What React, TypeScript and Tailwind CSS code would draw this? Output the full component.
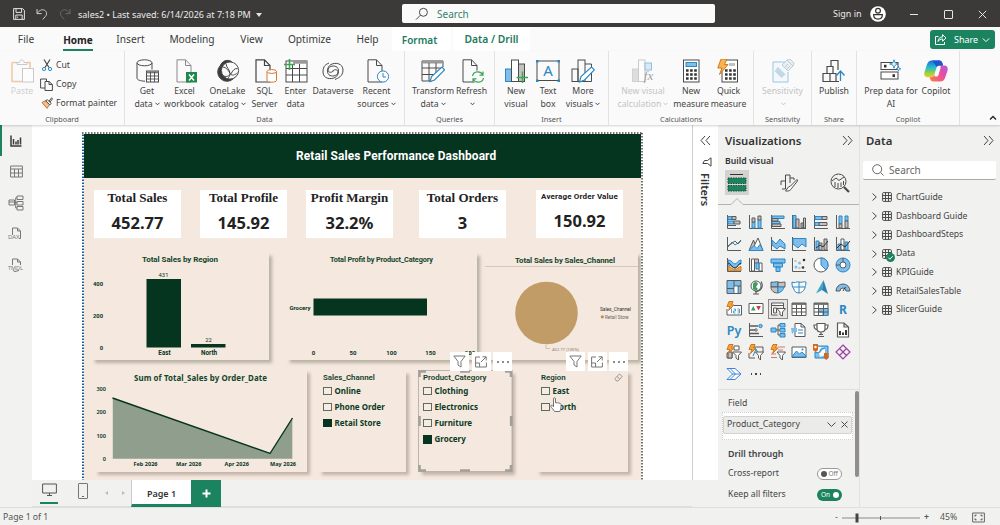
import type { ReactNode } from "react";

const INK = "#4a4a4a";
const BLUE = "#7fbdea";
const DEEP = "#2b88c4";
const GREY = "#c4c2c0";
const FOREST = "#06351f";
const TITLE = "#12452c";

type IconProps = { size?: number; box?: number; className?: string; stroke?: string; children: ReactNode };

function Icon({ size = 24, box = 24, className = "", stroke = INK, children }: IconProps) {
  return (
    <svg
      width={size}
      height={size}
      viewBox={`0 0 ${box} ${box}`}
      fill="none"
      stroke={stroke}
      strokeWidth={1}
      className={`block shrink-0 ${className}`}
    >
      {children}
    </svg>
  );
}

/* ---------- title bar ---------- */

function TitleBar() {
  return (
    <header className="flex h-[27px] shrink-0 items-center bg-[#3b3a39] text-[#ececec]">
      <div className="flex w-[402px] items-center">
        <Icon size={12} box={12} className="ml-[13px]">
          <path d="M.6.6h9L11.4 2.4v9H.6zM3 .8v3.6h5.6V.8M2.8 11.2V7h6.4v4.2M4.6 9.8V8.6" stroke="#e4e4e4" />
        </Icon>
        <Icon size={12} box={12} className="ml-[11px]">
          <path d="M1 1v4.6h4.6M1.2 5.4C3 2.4 6 1 8.4 2.2c2.8 1.5 2.6 4.5 1 6.2L6.8 11.4" stroke="#d0d0d0" />
        </Icon>
        <Icon size={12} box={12} className="ml-[11px]">
          <path d="M11 1v4.6H6.4M10.8 5.4C9 2.4 6 1 3.6 2.2c-2.8 1.5-2.6 4.5-1 6.2l2.6 3" stroke="#6a6a69" />
        </Icon>
        <span className="mt-[3px] ml-[7px] text-[9px] whitespace-nowrap">sales2 • Last saved: 6/14/2026 at 7:18 PM</span>
        <span className="mt-[2px] ml-[5px] border-x-[3.5px] border-t-[4px] border-x-transparent border-t-[#e4e4e4]" />
      </div>
      <div className="flex h-[19px] w-[313px] items-center rounded-[2px] bg-[#fafafa]">
        <Icon size={14} box={14} className="ml-[13px]">
          <circle cx="8.4" cy="5.3" r="4" />
          <path d="M5.4 8.2 1 12.6" />
        </Icon>
        <span className="mt-[2px] ml-[8px] text-[10px] text-[#38806b]">Search</span>
      </div>
      <span className="mt-[1px] ml-[118px] text-[9px] whitespace-nowrap">Sign in</span>
      <Icon size={16} box={16} className="ml-[8px]">
        <circle cx="8" cy="8" r="7.8" fill="#fff" stroke="none" />
        <circle cx="8" cy="4.8" r="2.4" stroke="#333" strokeWidth="1.2" />
        <path d="M3.6 8.6h8.8c0 3-1.8 4.6-4.4 4.6S3.6 11.6 3.6 8.6z" stroke="#333" strokeWidth="1.2" />
      </Icon>
      <span className="mt-[1px] ml-[24px] h-px w-[8px] bg-[#e4e4e4]" />
      <span className="mt-[1px] ml-[26px] size-[9px] rounded-[1px] border border-[#e4e4e4]" />
      <Icon size={9} box={9} className="mt-[1px] ml-[25px]">
        <path d="m.8.8 7.4 7.4M8.2.8.8 8.2" stroke="#e4e4e4" />
      </Icon>
    </header>
  );
}

/* ---------- ribbon ---------- */

const tabs = [
  { label: "File", cls: "w-[52px]" },
  { label: "Home", cls: "w-[52px] font-bold text-[10px] text-[#222]" },
  { label: "Insert", cls: "w-[53px]" },
  { label: "Modeling", cls: "w-[70px]" },
  { label: "View", cls: "w-[49px]" },
  { label: "Optimize", cls: "w-[67px]" },
  { label: "Help", cls: "w-[49px]" },
  { label: "Format", cls: "w-[59px] bg-white font-semibold text-[10px] text-[#217a5c] pr-1" },
  { label: "Data / Drill", cls: "w-[77px] ml-[2px] bg-white font-semibold text-[10.3px] text-[#217a5c]" },
];

function Tabs() {
  return (
    <nav className="flex h-[24px] shrink-0 items-center text-[10.2px] text-[#3a3a3a]">
      {tabs.map((t) => (
        <div
          key={t.label}
          className={`relative flex h-[24px] items-center justify-center pt-[2px] whitespace-nowrap ${t.cls}`}
        >
          {t.label}
          {t.label === "Home" && <span className="absolute bottom-0 left-[11px] h-[2px] w-[30px] bg-[#1b8360]" />}
        </div>
      ))}
      <div className="mt-[1px] ml-[400px] flex h-[19px] w-[65px] shrink-0 items-center rounded-[3px] bg-[#1b8360] text-white">
        <Icon size={13} box={13} className="ml-[4px]">
          <path d="M4.5 3.5H1.5v8h9V9M4 8.5c.4-3 2-4.600 4.600-4.600V1.600L12 5 8.600 8.200V6C6.500 6 5 6.800 4 8.500z" stroke="#fff" />
        </Icon>
        <span className="ml-[7px] text-[9px]">Share</span>
        <Icon size={8} box={8} className="ml-[4px]">
          <path d="m.8 2.400 3.200 3.200 3.200-3.200" stroke="#fff" />
        </Icon>
      </div>
    </nav>
  );
}

const docPath = "M4 .8h8.500L18 6.500V23H4zM12.500.8v5.700H18";

const ribbonIcons: Record<string, ReactNode> = {
  get: (
    <>
      <path d="M2 4v15c0 1.800 3 3 8 3.200M17 4v6.500" />
      <ellipse cx="9.500" cy="3.800" rx="7.500" ry="3" />
      <rect x="11.500" y="12" width="12" height="11" fill="#fff" />
      <path d="M11.500 13.300h12" strokeWidth="2" stroke="#777" />
      <path d="M11.500 17h12M11.500 20h12M15.500 13v10M19.500 13v10" strokeWidth=".9" />
    </>
  ),
  excel: (
    <>
      <path d={docPath} stroke="#8a8a8a" />
      <rect x="13" y="13" width="11" height="10.500" fill="#1d8a4c" stroke="none" />
      <path d="m16 15.500 5 6M21 15.500l-5 6" stroke="#fff" strokeWidth="1.500" />
    </>
  ),
  onelake: (
    <>
      <circle cx="11" cy="13" r="9.300" fill="#3b3b3b" />
      <path d="M4 7.500C6 1 12 .3 15.500 2.500L12 8z" fill="#3b3b3b" />
      <circle cx="14" cy="11.500" r="8.600" fill="#fafafa" />
      <path d="M6.500 8c4 0 6 4 8 7 1.500 2 4 1 7-1M6.500 16c3 3 7 1 9-2 1.500-3 3-4.500 6-4.500M10 4.500c0 4 4 6 4 10 0 2-1 4-2.500 5" />
    </>
  ),
  sql: (
    <>
      <path d={docPath} stroke="#444" strokeWidth="1.200" transform="translate(-1 0)" />
      <path d="M14 12.500v9c0 2.200 9.500 2.200 9.500 0v-9z" fill="#fff" stroke="#d0783a" />
      <ellipse cx="18.750" cy="12.500" rx="4.750" ry="1.900" fill="#fff" stroke="#d0783a" />
    </>
  ),
  enter: (
    <>
      <rect x="2" y="2" width="21" height="21" fill="#fff" />
      <path d="M9 3h14" stroke="#999" strokeWidth="3.500" />
      <path d="M2 9.500h21M2 16h21M8.500 5v18M15.500 5v18" />
      <path d="M5.500 0v11M0 5.500h11" stroke="#3aa655" strokeWidth="1.600" />
    </>
  ),
  dataverse: (
    <>
      <path d="M12 12.500c0-2.500 5-2.500 5 .500s-4.500 5-8 3.500-3.500-8.500 1-11 12-1 12 5.500-5 8-8 9.500" />
      <path d="M12 11.500c0 2.500-5 2.500-5-.500s4.500-5 8-3.500 3.500 8.500-1 11-12 1-12-5.500 3-7.500 6-9" />
    </>
  ),
  recent: (
    <>
      <path d={docPath} transform="translate(-1 0)" />
      <circle cx="18" cy="17.500" r="5.600" fill="#fff" stroke={DEEP} />
      <path d="M18 14v4h3" stroke={DEEP} />
    </>
  ),
  transform: (
    <>
      <path d="M1 2h21v6M1 2v20h10" />
      <path d="M1.500 3.200h20" stroke="#9a9a9a" strokeWidth="2.600" />
      <path d="M1 9h20M1 15.500h13M8 4v18M15 4v11" />
      <path d="m9 22.500 1.500-5L21 8l2.500 2.800L13.500 21z" fill="#fff" stroke={DEEP} strokeWidth="1.200" />
    </>
  ),
  refresh: (
    <>
      <path d={docPath} transform="translate(-1 0)" />
      <circle cx="18" cy="18" r="6.500" fill="#fafafa" stroke="none" />
      <path
        d="M12.500 17c1-5 8-5.500 10.300-1.300M23 12.500v3.600h-3.500M23.500 19c-1 5-8 5.500-10.300 1.300M13 23.500v-3.600h3.500"
        stroke="#3aa655"
        strokeWidth="1.200"
      />
    </>
  ),
  newvisual: (
    <>
      <rect x="1.500" y="10" width="6" height="12.500" fill={BLUE} stroke={DEEP} />
      <rect x="7.500" y="1" width="7" height="21.500" fill="#fff" />
      <rect x="14.500" y="5" width="6" height="17.500" fill={GREY} />
      <path d="M18.500 12.500v11.500M12.500 18.500h12" stroke="#3aa655" strokeWidth="1.500" />
    </>
  ),
  textbox: (
    <>
      <rect x="1" y="2" width="22" height="19.500" />
      <path d="M0 1h2.500v2.500H0zM21.500 1H24v2.500h-2.500zM0 20.500h2.500V23H0zM21.500 20.500H24V23h-2.500z" fill={DEEP} stroke="none" />
      <text x="12" y="17" textAnchor="middle" fontSize="15" fill={DEEP} stroke="none">
        A
      </text>
    </>
  ),
  more: (
    <>
      <rect x="1" y="10" width="6" height="12.500" />
      <rect x="7" y="1" width="7" height="21.500" />
      <path d="M14 5h6.500v17.500H14" />
      <path d="m8.500 23 1.500-5.500L20.500 8l2.800 2.800L13.500 21z" fill="#fff" stroke={DEEP} strokeWidth="1.200" />
    </>
  ),
  calc: (
    <g opacity=".5">
      <rect x="1.500" y="10" width="6" height="12.500" fill={GREY} stroke="#aaa" />
      <rect x="7.500" y="1" width="6.500" height="21.500" fill="#fff" stroke="#999" />
      <rect x="14" y="4" width="6.500" height="7" fill="#b5dbf0" stroke={DEEP} />
      <text x="17.500" y="20.500" textAnchor="middle" fontSize="13" fontStyle="italic" fill="#444" stroke="none" fontFamily="Liberation Serif">
        fx
      </text>
    </g>
  ),
  measure: (
    <>
      <rect x="4.500" y="1" width="15.500" height="22" fill="#fff" />
      <rect x="7" y="3.500" width="10.500" height="4" fill={BLUE} stroke={DEEP} />
      <path d="M7 11.500h11M7 15.500h11M7 19.500h11" stroke="#333" strokeWidth="2.500" strokeDasharray="2.600 1.500" />
    </>
  ),
  quick: (
    <>
      <rect x="5" y="1" width="15.500" height="22" fill="#fff" />
      <path d="M12 5.500h6" stroke={GREY} strokeWidth="3" />
      <path d="M8 11.500h11M8 15.500h11M8 19.500h11" stroke="#333" strokeWidth="2.500" strokeDasharray="2.600 1.500" />
      <path d="M4 0h6L7.500 5.500H11L2.500 15.500 5 9H.8z" fill="#f7b354" stroke="#cf7a1c" />
    </>
  ),
  sensitivity: (
    <g opacity=".45">
      <path d="M15 3H2v20h15V13" stroke={DEEP} fill="#eef7fb" />
      <path d="m6 9 7.500 7.500M4.500 11l7 7" stroke="#7fb3cc" strokeWidth="3" />
      <path d="m11 6 5-5 6 6-5 5zM16 1l3-1 4 4-1 3M13 9l4-4M15 11l4-4" fill="#cfe3ec" stroke="#7a9aa8" />
    </g>
  ),
  publish: (
    <>
      <path d="M1 22.500v-8h7v8zM5 14V7.500h6v7M8 14.500h6v8H8M9 7V1.500h7V11M14 22.500h3" strokeWidth="1.200" />
      <path d="M18.500 22V12M14.500 16.500l4-4.500 4 4.500" stroke={DEEP} strokeWidth="1.300" />
    </>
  ),
  prep: (
    <>
      <rect x="2" y="3.500" width="17" height="7" fill="#fff" />
      <rect x="2" y="13" width="17" height="7" fill="#fff" />
      <path d="M5 5.800h2.500V8.500H5zM13.500 15.300H16V18h-2.500z" fill="#333" stroke="none" />
      <path
        d="M15 .8c.5 2.800 1.500 3.700 4.300 4.200-2.800.5-3.800 1.400-4.300 4.200-.5-2.800-1.500-3.700-4.300-4.200C13.500 4.500 14.500 3.600 15 .8z"
        fill="#d6f1fa"
        stroke={DEEP}
      />
      <path
        d="M19.500 7.500c.2 1.500.8 2.100 2.300 2.300-1.500.2-2.100.8-2.300 2.300-.2-1.500-.8-2.100-2.300-2.300 1.500-.2 2.100-.8 2.300-2.300z"
        fill="#fff"
        stroke={DEEP}
      />
    </>
  ),
  copilot: (
    <>
      <defs>
        <linearGradient id="cpA" x1="0" y1="0" x2="0" y2="1">
          <stop offset="0" stopColor="#1b6fe0" />
          <stop offset=".45" stopColor="#2bc0c8" />
          <stop offset=".75" stopColor="#9bd13a" />
          <stop offset="1" stopColor="#f7c62c" />
        </linearGradient>
        <linearGradient id="cpB" x1="1" y1="0" x2="0" y2="1">
          <stop offset="0" stopColor="#9a5cf0" />
          <stop offset=".5" stopColor="#ea4fa0" />
          <stop offset="1" stopColor="#fb7f3c" />
        </linearGradient>
      </defs>
      <path
        d="M8 1.500h7c2 0 3 1 3.500 3L19 6.500h-3.500c-2 0-2.700 1-3.200 2.700L10.500 15c-.7 2.300-1.700 3.300-4 3.300H3.500C.8 18.300-.3 16 .6 12.800L3 5.500c.9-2.700 2.300-4 5-4z"
        fill="url(#cpA)"
        stroke="none"
      />
      <path
        d="M14.500 1.500c2 0 3.200 1.300 3.600 3l.7 2h1.700c2.700 0 3.800 2.300 2.900 5.500L21 19c-.9 2.500-2.300 3.500-5 3.500H9.500c-2 0-3-1-3.500-3l-.3-1.200h1c2.300 0 3.300-1 4-3.300l-.2.7c-.3 1.100.3 1.800 1.300 1.800h.7c1 0 1.800-.6 2.100-1.800l1.900-6.700C17 7 16.300 6.500 15.500 6.500h1z"
        fill="url(#cpB)"
        stroke="none"
      />
      <path d="M8 1.500h7c2 0 3 1 3.500 3L19 6.500h-3.500c-1.500 0-2.200.5-2.700 1.500z" fill="#1d54cf" stroke="none" />
    </>
  ),
};

type RibbonItem = { icon: string; lines: string[]; width: string; caret?: boolean; muted?: boolean };
type RibbonGroupData = { label: string; width: string; items: RibbonItem[] };

const groups: RibbonGroupData[] = [
  {
    label: "Data",
    width: "w-[280px]",
    items: [
      { icon: "get", lines: ["Get", "data"], width: "w-[44px]", caret: true },
      { icon: "excel", lines: ["Excel", "workbook"], width: "w-[31px]" },
      { icon: "onelake", lines: ["OneLake", "catalog"], width: "w-[55px]", caret: true },
      { icon: "sql", lines: ["SQL", "Server"], width: "w-[19px]" },
      { icon: "enter", lines: ["Enter", "data"], width: "w-[43px]" },
      { icon: "dataverse", lines: ["Dataverse"], width: "w-[32px]" },
      { icon: "recent", lines: ["Recent", "sources"], width: "w-[55px]", caret: true },
    ],
  },
  {
    label: "Queries",
    width: "w-[90px]",
    items: [
      { icon: "transform", lines: ["Transform", "data"], width: "w-[56px]", caret: true },
      { icon: "refresh", lines: ["Refresh", ""], width: "w-[21px]", caret: true },
    ],
  },
  {
    label: "Insert",
    width: "w-[114px]",
    items: [
      { icon: "newvisual", lines: ["New", "visual"], width: "w-[42px]" },
      { icon: "textbox", lines: ["Text", "box"], width: "w-[22px]" },
      { icon: "more", lines: ["More", "visuals"], width: "w-[48px]", caret: true },
    ],
  },
  {
    label: "Calculations",
    width: "w-[145px]",
    items: [
      { icon: "calc", lines: ["New visual", "calculation"], width: "w-[68px]", caret: true, muted: true },
      { icon: "measure", lines: ["New", "measure"], width: "w-[28px]" },
      { icon: "quick", lines: ["Quick", "measure"], width: "w-[47px]" },
    ],
  },
  {
    label: "Sensitivity",
    width: "w-[58px]",
    items: [{ icon: "sensitivity", lines: ["Sensitivity", ""], width: "w-[57px]", caret: true, muted: true }],
  },
  { label: "Share", width: "w-[45px]", items: [{ icon: "publish", lines: ["Publish"], width: "w-[44px]" }] },
  {
    label: "Copilot",
    width: "w-[103px]",
    items: [
      { icon: "prep", lines: ["Prep data for", "AI"], width: "w-[68px]" },
      { icon: "copilot", lines: ["Copilot"], width: "w-[22px]" },
    ],
  },
];

function Caret() {
  return (
    <svg width="5" height="4" viewBox="0 0 5 4" fill="none" stroke="currentColor" className="ml-[2px] inline-block">
      <path d="M.5.8 2.5 2.8 4.5.8" />
    </svg>
  );
}

function RibbonButton({ icon, lines, width, caret, muted }: RibbonItem) {
  return (
    <div className={`flex shrink-0 flex-col items-center ${width} ${muted ? "text-[#c4c4c4]" : "text-[#444]"}`}>
      <Icon>{ribbonIcons[icon]}</Icon>
      <div className="mt-[2px] text-center text-[8.7px] leading-[12.5px] whitespace-nowrap">
        {lines.map((line, i) => (
          <div key={i}>
            {line}
            {caret && i === lines.length - 1 && <Caret />}
          </div>
        ))}
      </div>
    </div>
  );
}

function ClipboardGroup() {
  return (
    <div className="flex h-[74px] w-[125px] shrink-0 flex-col border-r border-[#e3e3e3]">
      <div className="flex flex-1 pt-[8px]">
        <div className="flex w-[41px] flex-col items-center pl-[3px] text-[8.8px] text-[#cfcfcf]">
          <Icon>
            <g opacity=".6">
              <path d="M2 3.5h5M17 3.5h3V9M2 3.5v19h10" stroke="#e9a96b" strokeWidth="1.5" />
              <path d="M7 5.5V3.5h2.5C9.5 0 14 0 14 3.5H17v2z" stroke="#aaa" />
              <rect x="12.5" y="9.5" width="11" height="13.5" fill="#fff" stroke="#aaa" />
            </g>
          </Icon>
          <span className="mt-[2px] leading-[12.5px]">Paste</span>
        </div>
        <div className="flex flex-col gap-[6.7px] text-[8.7px] leading-[12px] whitespace-nowrap text-[#3f3f3f]">
          <div className="flex items-center gap-[3px]">
            <Icon size={12} box={12}>
              <path d="M3 .5l5 8M9 .5l-5 8" strokeWidth="1.2" />
              <circle cx="3" cy="10" r="1.6" stroke={DEEP} />
              <circle cx="9" cy="10" r="1.6" stroke={DEEP} />
            </Icon>
            Cut
          </div>
          <div className="flex items-center gap-[3px]">
            <Icon size={13} box={13} className="-ml-px">
              <path d="M5 10H.6V1h5.9v2.5M5 3.5h4L12.4 6.500v6H5zM9 3.500v3h3.400" />
            </Icon>
            Copy
          </div>
          <div className="flex items-center gap-[3px]">
            <Icon size={12} box={12}>
              <path d="m1 5.500 3.500-1.800L8.500 7.500 6 11.400z" fill="#f3c08a" stroke="#c9762c" />
              <path d="m4.500 3.800 1.800-1 4 3.600-1.500 1.400zM8 4.200l2.600-3.400 1 .9-2.500 3.300" fill="#fff" />
            </Icon>
            Format painter
          </div>
        </div>
      </div>
      <div className="h-[11px] text-center text-[7.4px] leading-[11px] text-[#555]">Clipboard</div>
    </div>
  );
}

function Ribbon() {
  return (
    <section className="relative z-10 flex h-[74px] shrink-0 bg-[#fafafa] shadow-[0_1px_2px_rgba(0,0,0,0.18)]">
      <ClipboardGroup />
      {groups.map((g) => (
        <div key={g.label} className={`flex shrink-0 flex-col border-r border-[#e3e3e3] ${g.width}`}>
          <div className="flex flex-1 pt-[8px]">
            {g.items.map((item) => (
              <RibbonButton key={item.icon} {...item} />
            ))}
          </div>
          <div className="h-[11px] text-center text-[7.4px] leading-[11px] text-[#555]">{g.label}</div>
        </div>
      ))}
      <Icon size={8} box={8} className="mt-[63px] ml-[29px]">
        <path d="m1 5.5 3-3 3 3" stroke="#222" strokeWidth="1.3" />
      </Icon>
    </section>
  );
}

/* ---------- left rail ---------- */

function Rail() {
  return (
    <aside className="flex w-[32px] shrink-0 flex-col items-center bg-[#f2f2f1]">
      <div className="flex h-[31px] w-full items-center justify-center border-l-2 border-[#1b8360] pr-[2px]">
        <Icon size={12} box={12}>
          <path d="M1 .5V11h10.5M3.5 9.5V4M6 9.5V6.5M8 9.5V5M10.5 9.5V2.5" stroke="#3a3a3a" strokeWidth="1.5" />
        </Icon>
      </div>
      <Icon size={13} box={13} className="mt-[9px]">
        <path d="M.6 1h11.8v11H.6zM.6 4h11.8M.6 8h11.8M4.5 4v8M8.5 4v8" stroke="#777" />
      </Icon>
      <Icon size={16} box={16} className="mt-[17px]">
        <path
          d="M1 5h5.5v5H1zM1 7h5.5M9 1h6v3.5H9zM9 6.5h6V10H9zM9 11.5h6V15H9zM6.5 7.5H9M7.7 2.8V13M7.7 2.8H9M7.7 13H9"
          stroke="#777"
        />
      </Icon>
      <div className="relative mt-[16px] h-[16px] w-[14px]">
        <Icon size={14} box={14}>
          <path d="M3.5 8V1h5L11.5 4v7.500H10M8.500 1v3h3" stroke="#777" />
        </Icon>
        <span className="absolute top-[6px] left-[-1px] text-[6px] text-[#777]">DAX</span>
      </div>
      <div className="relative mt-[15px] h-[16px] w-[14px]">
        <Icon size={14} box={14}>
          <path d="M3.500 7V1h5L11.500 4v3M8.500 1v3h3M4 12.500l2 1L10 12.500" stroke="#777" />
        </Icon>
        <span className="absolute top-[6px] left-[-1px] text-[5.5px] text-[#777]">TMDL</span>
      </div>
    </aside>
  );
}

/* ---------- report page ---------- */

const kpis = [
  { title: "Total Sales", value: "452.77", cls: "" },
  { title: "Total Profile", value: "145.92", cls: "ml-[19px]" },
  { title: "Profit Margin", value: "32.2%", cls: "ml-[19px]" },
  { title: "Total Orders", value: "3", cls: "ml-[26px]" },
  { title: "Average Order Value", value: "150.92", cls: "ml-[30px]", small: true },
];

function KpiCard({ title, value, cls, small }: (typeof kpis)[number] & { small?: boolean }) {
  return (
    <div className={`flex h-[48px] w-[87px] shrink-0 flex-col items-center bg-white text-[#222] ${cls}`}>
      <div
        className={
          small
            ? "mt-[1px] font-[Roboto] text-[8px] leading-[11px] font-bold tracking-[0.02em] whitespace-nowrap"
            : "font-['Liberation_Serif'] text-[13px] leading-[16px] font-bold whitespace-nowrap"
        }
      >
        {title}
      </div>
      <div className={`text-[16.5px] leading-[20px] font-bold ${small ? "mt-[9px]" : "mt-[7px]"}`}>{value}</div>
    </div>
  );
}

function RegionChart() {
  return (
    <svg width="177" height="107" viewBox="92 253 177 107" className="block font-[Roboto]" fill={FOREST} fontWeight="700">
      <text x="142" y="262" fontSize="8" textLength="76" fill={TITLE}>Total Sales by Region</text>
      <g fontSize="5.8" textAnchor="end">
        <text x="103" y="286">400</text>
        <text x="103" y="318">200</text>
        <text x="103" y="349.5">0</text>
      </g>
      <rect x="146.5" y="279" width="34.5" height="68.5" />
      <rect x="191" y="344" width="34.5" height="3.5" />
      <g fontSize="5.8" textAnchor="middle">
        <text x="163.5" y="277" fontWeight="400">431</text>
        <text x="208.5" y="341.5" fontWeight="400">22</text>
        <text x="164.5" y="354.5" fontSize="6.3">East</text>
        <text x="209" y="354.5" fontSize="6.3">North</text>
      </g>
    </svg>
  );
}

function ProfitChart() {
  return (
    <svg width="190" height="107" viewBox="287 253 190 107" className="block font-[Roboto]" fill={FOREST} fontWeight="700">
      <text x="330" y="262" fontSize="7.3" textLength="103" fill={TITLE}>Total Profit by Product_Category</text>
      <text x="289.5" y="309.5" fontSize="6" textLength="21">Grocery</text>
      <rect x="313.5" y="298.5" width="113.5" height="17" />
      <g fontSize="6" textAnchor="middle">
        <text x="313.5" y="354.5">0</text>
        <text x="353" y="354.5">50</text>
        <text x="391.5" y="354.5">100</text>
        <text x="430.5" y="354.5">150</text>
        <text x="470" y="354.5">200</text>
      </g>
    </svg>
  );
}

function ChannelChart() {
  return (
    <svg width="153" height="107" viewBox="485 253 153 107" className="block font-[Roboto]" fill={FOREST}>
      <text x="515" y="263" fontSize="7.8" fontWeight="700" textLength="100" fill={TITLE}>Total Sales by Sales_Channel</text>
      <path d="M485 266.5h153" stroke="#c9bfb4" strokeWidth=".8" />
      <circle cx="546.5" cy="313" r="31.300" fill="#c29c66" />
      <path d="M546 345v3.500h4" fill="none" stroke="#aaa" strokeWidth=".6" />
      <text x="552" y="350.500" fontSize="4.300" fill="#8a8078" textLength="27">452.77 (100%)</text>
      <text x="600" y="311" fontSize="4.900" fill="#333" textLength="31">Sales_Channel</text>
      <circle cx="602.300" cy="316.800" r="1.600" fill="#b8904f" />
      <text x="605" y="318.700" fontSize="4.600" fill="#666" textLength="23.500">Retail Store</text>
    </svg>
  );
}

function TrendChart() {
  return (
    <svg width="212" height="102" viewBox="95 370 212 102" className="block" fill={FOREST} fontWeight="700">
      <text x="134" y="380.500" fontSize="7.900" textLength="133" fill={TITLE}>Sum of Total_Sales by Order_Date</text>
      <g fontSize="5.600" textAnchor="end" fontWeight="600">
        <text x="106" y="390.500">300</text>
        <text x="106" y="414">200</text>
        <text x="106" y="437.500">100</text>
        <text x="106" y="461">0</text>
      </g>
      <path d="M112.800 398 270 453.500 292.300 418v40.700H112.800z" fill="#8f9e8d" />
      <path d="M112.500 398 270 453.500 292.500 418" fill="none" stroke={FOREST} strokeWidth="1.400" />
      <g fontSize="5.500">
        <text x="133.500" y="466" textLength="24">Feb 2026</text>
        <text x="176" y="466" textLength="25.500">Mar 2026</text>
        <text x="224.500" y="466" textLength="24.500">Apr 2026</text>
        <text x="270" y="466" textLength="26">May 2026</text>
      </g>
    </svg>
  );
}

function VisualToolbar({ className }: { className: string }) {
  return (
    <div className={`absolute flex gap-[2.5px] ${className}`}>
      <span className="flex h-[19px] w-[19px] items-center justify-center bg-white">
        <Icon size={13} box={13}>
          <path d="M.8 1h11.400L8 6.500V12L5 10V6.500z" stroke="#777" />
        </Icon>
      </span>
      <span className="flex h-[19px] w-[19px] items-center justify-center bg-white">
        <Icon size={12} box={12}>
          <path d="M5 1H.6v10h10.800V6.500M.6 7h4v4M6 6l5-5M7.500.8h3.700v3.700" stroke="#777" />
        </Icon>
      </span>
      <span className="flex h-[19px] w-[19px] items-center justify-center gap-[3px] bg-white">
        <i className="size-[2px] rounded-full bg-[#666]" />
        <i className="size-[2px] rounded-full bg-[#666]" />
        <i className="size-[2px] rounded-full bg-[#666]" />
      </span>
    </div>
  );
}

type SlicerProps = { title: string; options: string[]; checked?: string; className: string; children?: ReactNode };

function Slicer({ title, options, checked, className, children }: SlicerProps) {
  return (
    <div
      className={`relative mt-[1px] h-[101px] shrink-0 bg-[#f4e8df] pt-[2px] pl-[4px] shadow-[3px_3px_3px_rgba(90,70,60,0.32)] ${className}`}
    >
      <div className="font-[Roboto] text-[7.9px] leading-[10px] font-semibold text-[#12402b]">{title}</div>
      {options.map((o) => (
        <div key={o} className="flex h-[16.1px] items-center gap-[3px] text-[8px] font-bold whitespace-nowrap text-[#0c3a24]">
          <span className={o === checked ? "size-[8.5px] bg-[#06351f]" : "size-[8.5px] border border-[#5c6c5e] bg-[#f6ece4]"} />
          {o}
        </div>
      ))}
      {children}
    </div>
  );
}

function SelectionHandles() {
  return (
    <svg width="95" height="102" viewBox="0 0 95 102" fill="none" stroke="#a3a09c" className="absolute -top-px -left-px">
      <rect x=".5" y=".5" width="93.500" height="101" strokeWidth=".7" />
      <path
        d="M1.500 7V1.500H8M87 1.500h6V7M1.500 95v5.500H8M87 100.500h6V95M42 1.500h10M42 100.500h10M1.500 46v10M93.200 46v10"
        strokeWidth="2.600"
      />
    </svg>
  );
}

function ReportPage() {
  const card = "shrink-0 bg-[#f4e8df] shadow-[3px_3px_3px_rgba(80,85,55,0.36)]";
  return (
    <div className="relative mt-[7px] ml-[50px] flex h-[348px] w-[561px] flex-col overflow-hidden bg-[#f4e8df] p-[1px]">
      <div className="flex h-[45px] shrink-0 items-center bg-[#06351f] pt-[2px] pl-[213px] font-[Roboto] text-[11.9px] font-bold tracking-[0.01em] whitespace-nowrap text-white">
        Retail Sales Performance Dashboard
      </div>
      <div className="mt-[12px] flex pl-[11px]">
        {kpis.map((k) => (
          <KpiCard key={k.title} {...k} />
        ))}
      </div>
      <div className="mt-[15px] flex pl-[9px]">
        <div className={card}>
          <RegionChart />
        </div>
        <div className={`ml-[18px] ${card}`}>
          <ProfitChart />
        </div>
        <div className={`ml-[8px] ${card}`}>
          <ChannelChart />
        </div>
      </div>
      <div className="mt-[10px] flex pl-[12px]">
        <div className="shrink-0 bg-[#f4e8df] shadow-[3px_3px_3px_rgba(90,70,60,0.32)]">
          <TrendChart />
        </div>
        <Slicer
          title="Sales_Channel"
          options={["Online", "Phone Order", "Retail Store"]}
          checked="Retail Store"
          className="ml-[12px] w-[87px]"
        />
        <Slicer
          title="Product_Category"
          options={["Clothing", "Electronics", "Furniture", "Grocery"]}
          checked="Grocery"
          className="ml-[13px] w-[93px]"
        >
          <SelectionHandles />
        </Slicer>
        <Slicer title="Region" options={["East", "North"]} className="ml-[25px] w-[91px]">
          <Icon size={9} box={9} className="absolute top-[2px] right-[5px]">
            <path d="M1 5.500 5.500 1l2.700 2.500L4 8H2.500zM3 3.500l2.800 2.700" stroke="#8a8480" strokeWidth=".8" />
          </Icon>
          <svg width="12" height="16" viewBox="0 0 12 16" className="absolute top-[26px] left-[13px]">
            <path
              d="M3.500 9V1.800c0-1.400 2-1.400 2 0v4c2-.3 5.600.4 5.600 1.700 0 4-.6 5-1.300 7H4.600C3.600 12.500 1.500 11 .8 9.300c-.4-1 1-1.500 2.700.3z"
              fill="#fff"
              stroke="#666"
              strokeWidth=".9"
            />
          </svg>
        </Slicer>
      </div>
      <VisualToolbar className="top-[220px] left-[368px]" />
      <VisualToolbar className="top-[220px] left-[484px]" />
      <svg width="561" height="349" viewBox="0 0 561 349" fill="none" className="pointer-events-none absolute top-0 left-0">
        <path d="M1 349V1M560 349V1M0 1h561" stroke="#fff" strokeWidth="2" />
        <path d="M1 349V1" stroke="#1d5d96" strokeWidth="2" strokeDasharray="1.500 1.500" />
        <path d="M0 1h561M560 1v348" stroke="#444" strokeWidth="1.500" strokeDasharray="1.500 1.500" />
      </svg>
    </div>
  );
}

function PageTabs() {
  return (
    <div className="flex h-[27px] shrink-0 items-center border-b border-[#dedede] bg-[#f1f1ef]">
      <div className="ml-[8px] flex w-[18px] flex-col items-center">
        <Icon size={15} box={15}>
          <path d="M.6 1h13.800v9H.6zM7.500 10v2.500M5 12.500h5" stroke="#555" />
        </Icon>
        <span className="mt-[4px] h-[2px] w-full bg-[#1b8360]" />
      </div>
      <span className="relative mb-[4px] ml-[20px] h-[16px] w-[10px] rounded-[1px] border border-[#777]">
        <i className="absolute bottom-[1px] left-[3px] h-px w-[2px] bg-[#666]" />
      </span>
      <span className="ml-[17px] border-y-[2.5px] border-r-[3px] border-y-transparent border-r-[#bbb]" />
      <span className="ml-[14px] border-y-[2.5px] border-l-[3px] border-y-transparent border-l-[#bbb]" />
      <div className="ml-[6px] flex h-[27px] w-[60px] items-center justify-center border-b-[3px] border-l border-b-[#1b8360] border-l-[#ccc] bg-white pt-[4px] text-[9px] font-semibold text-[#333]">
        Page 1
      </div>
      <div className="flex h-[27px] w-[30px] items-center justify-center bg-[#1b8360]">
        <Icon size={9} box={9}>
          <path d="M4.500.5v8M.5 4.500h8" stroke="#fff" strokeWidth="2" />
        </Icon>
      </div>
    </div>
  );
}

/* ---------- side panes ---------- */

function DoubleChevron({ left, className = "" }: { left?: boolean; className?: string }) {
  return (
    <Icon size={11} box={11} className={className}>
      <path d={left ? "M5 1 1 5.500 5 10M10 1 6 5.500 10 10" : "m1 1 4 4.500L1 10M6 1l4 4.500L6 10"} stroke="#444" />
    </Icon>
  );
}

function FiltersPane() {
  return (
    <aside className="flex w-[26px] shrink-0 flex-col">
      <div className="flex h-[355px] flex-col items-center border-l border-[#cfcfcf] bg-white pt-[10px]">
        <DoubleChevron left />
        <Icon size={10} box={10} className="mt-[11px] ml-[3px]">
          <path d="M9 .8v8.400L5.500 6.500H.8L2.500 3.500h3z" stroke="#444" />
        </Icon>
        <span className="mt-[6px] mr-[2px] text-[11px] leading-[12px] font-semibold text-[#333] [writing-mode:vertical-rl]">
          Filters
        </span>
      </div>
    </aside>
  );
}

const axes = <path d="M1.500 1v13.500H15" />;
const bolt = <path d="M3 .5h4L5.500 4H8L2.500 9.500 4 5.500H1z" fill="#f5a341" stroke="#cc7718" />;
const grid = <path d="M1 7.500h14M1 11h14M5.500 4v10.500M10.500 4v10.500" />;

// One entry per gallery cell, listed row by row, drawn on a 16px grid.
const gallery: ReactNode[] = [
  <>{axes}<path d="M2 2.500h4v3H2zM2 7h6v3H2z" fill={BLUE} stroke={DEEP} /><path d="M6 2.500h4v3H6zM8 7h6v3H8zM2 11.500h8" fill={GREY} /></>,
  <>{axes}<path d="M4 8h3v6H4zM10 5h3v9h-3z" fill={BLUE} stroke={DEEP} /><path d="M4 4h3v4H4zM10 2h3v4h-3z" fill={GREY} /></>,
  <>{axes}<path d="M2 2h12v2.500H2zM2 7.500h8V10H2z" fill={BLUE} stroke={DEEP} /><path d="M2 4.500h6V7H2zM2 10h9v2.500H2z" fill={GREY} /></>,
  <>{axes}<path d="M2 1.500h3V14H2z" fill={BLUE} stroke={DEEP} /><path d="M5 5h3v9H5zM10 9h2v5h-2zM12.500 4h2v10h-2z" fill={GREY} /></>,
  <>{axes}<path d="M2 2.500h7v3H2zM2 8.500h4v3H2z" fill={BLUE} stroke={DEEP} /><path d="M9 2.500h5v3H9zM6 8.500h8v3H6z" fill={GREY} /></>,
  <>{axes}<path d="M4 2h3v8H4zM10 2h3v5h-3z" fill={BLUE} stroke={DEEP} /><path d="M4 10h3v4H4zM10 7h3v7h-3z" fill={GREY} /></>,
  <>{axes}<path d="m2 11 4-5 3 3 6-4" stroke={DEEP} /><path d="m2 10 3-2 4-3 3 3 3-4" /></>,
  <><path d="M1 14.500 5.500 4l4 10.500z" fill={GREY} /><path d="m4 14.500 6-12.500 5 12.500z" fill="#fff" /><path d="m1 14.500 5-5 3 3 3-4 3 6z" fill={BLUE} stroke={DEEP} /></>,
  <>{axes}<path d="m2 4 4 4 4-5 5 5v5l-5-3-3 3-5-4z" fill={BLUE} stroke={DEEP} /></>,
  <>{axes}<path d="M2 2.500h13V11l-4-3-4 4-5-4z" fill={BLUE} stroke={DEEP} /></>,
  <>{axes}<path d="M3 5h3v9H3z" fill={BLUE} stroke={DEEP} /><path d="M6 7h3v7H6zM11 3h3v11h-3z" fill={GREY} /><path d="m3 12 4-3 3 2 5-6" stroke="#333" /></>,
  <>{axes}<path d="M3 8h3v6H3zM10 6h3v8h-3z" fill={BLUE} stroke={DEEP} /><path d="M6 3h3v11H6z" fill="#fff" /><path d="m2 12 4-4 4 3 5-6" stroke="#333" /></>,
  <><path d="M2 3c4 0 5 4 7 4s3-4 6-4v4c-3 0-4 4-6 4S5 8 2 8z" fill={BLUE} stroke={DEEP} /><path d="M2 9.500c3 0 4 3 7 3s3-3 6-3V14H2z" fill="#eda54f" stroke="#c97a22" />{axes}<path d="M2 6c3 0 4 5 7 5s3-5 6-5" stroke="#333" /></>,
  <>{axes}<path d="M3.500 2h3v12h-3zM11 6h3v8h-3z" fill="#fff" /><path d="M6.500 2h4v4h-4z" fill={GREY} /><path d="M8 6h3v6H8z" fill={BLUE} stroke={DEEP} /></>,
  <><path d="M1 2h14v4H1zM3.500 6h9v4h-9zM6 10h4v4.500H6z" fill={BLUE} stroke={DEEP} /></>,
  <>{axes}<g stroke="none"><circle cx="5" cy="10" r="1.500" fill={BLUE} /><circle cx="8.500" cy="6" r="1.500" fill={BLUE} /><circle cx="13" cy="3" r="1.300" fill="#333" /><circle cx="12" cy="10.500" r="1.300" fill="#333" /><circle cx="4.500" cy="4" r="1.200" fill={GREY} /><circle cx="8.500" cy="11" r="1.200" fill={GREY} /></g></>,
  <><circle cx="8" cy="8" r="7" fill="#fff" /><path d="M8 8V1a7 7 0 0 1 5 12z" fill={BLUE} stroke={DEEP} /></>,
  <><circle cx="8" cy="8" r="5" stroke={BLUE} strokeWidth="4" /><circle cx="8" cy="8" r="7" stroke={DEEP} /><circle cx="8" cy="8" r="3" fill="#fff" /><path d="M8 1v4M1 8h4" /></>,
  <><path d="M1 1.500h14v13H1z" fill={BLUE} /><path d="M8 1.500v13M8 7h7M12 7v7.500M1 9.500h7" /><path d="M8.500 7.500h3V14h-3z" fill="#fff" stroke="none" /></>,
  <><circle cx="8" cy="7" r="5" fill="#fff" /><path d="M5 5c2-3 4-2 5 0l-2 3 2 2c-2 2-4 1-5 0z" fill="#3f9c5e" stroke="none" /><path d="M13 2.500c3 5 0 10-6 10M8 12.500v2M5 15h6" strokeWidth="1.200" /></>,
  <><path d="M1 3c3 1 5-1 7 0v5H1z" fill={BLUE} /><path d="M8 3c3 1 5 0 7 0v5H8zM1 8h7v6C4 14 1 12 1 8z" fill={GREY} /><path d="M8 8h6c-1 4-3 5-6 6z" fill={BLUE} stroke={DEEP} /></>,
  <><path d="M1 3c3 2 4-1 7 0 3 1 5-1 7 0 0 3-1 4-1 6-1 3-4 5-6 5-3 0-5-2-5-4C1 8 1 6 1 3zM8 3v5h6M2 8h6v6" fill="#fff" stroke={DEEP} /></>,
  <><path d="M10.500 1 3 14.500l6-3.500z" fill="#38a7c9" stroke="none" /><path d="M10.500 1 15 15l-6-4z" fill="#2b7fae" stroke="none" /></>,
  <><path d="M1 12a7 7 0 0 1 14 0h-4a3 3 0 0 0-6 0z" fill={BLUE} /><path d="m8 12 2.500-4" stroke="#333" /></>,
  <><path d="M3 4.500h12.500V14H1V8" fill="#fff" /><path d="M5.500 7.500v4.500M7.500 8h2v2h-2v2h2M11.500 8h2v4h-2M11.500 10h2" stroke={DEEP} strokeWidth=".8" />{bolt}</>,
  <><path d="M1 2.500h14v10H1z" fill="#fff" /><path d="m3 9.500 2.300-4.500 2.300 4.500z" fill="#3f9c5e" stroke="none" /><path d="m8.300 5 2.300 4.500L12.900 5z" fill="#cf3a3f" stroke="none" /></>,
  <><path d="M1.500 2h12v5M1.500 2v12h6M1.500 4.500h12M3.500 7h3v5h-3z" fill="#fff" /><path d="M7 7.500h8.500L12.500 11v4l-2.500-1v-3z" fill="#fff" /></>,
  <><path d="M1 2h14v12.500H1z" fill="#fff" /><path d="M1 3h14" strokeWidth="1.600" />{grid}</>,
  <><path d="M1 2h14v12.500H1z" fill="#fff" /><path d="M5.500 7.500h9.500v7H10V11H5.500z" fill={BLUE} stroke={DEEP} /><path d="M1 3h14" strokeWidth="1.600" />{grid}</>,
  <text x="8" y="12.500" textAnchor="middle" fontSize="12" fontWeight="700" fill={DEEP} stroke="none">R</text>,
  <text x="8" y="12.500" textAnchor="middle" fontSize="12.500" fontWeight="600" fill={DEEP} stroke="none">Py</text>,
  <>{axes}<path d="M2 4h8M2 8h5M2 11.500h9" strokeWidth="1.500" /><circle cx="12.500" cy="4" r="1.700" fill={BLUE} stroke={DEEP} /><circle cx="8" cy="8" r="1.200" fill="#fff" /></>,
  <><path d="M1 6h5v4H1zM10 1.500h5v3.500h-5zM10 6.500h5V10h-5zM10 11.500h5V15h-5z" fill={BLUE} stroke={DEEP} /><path d="M6 8h4M8 3v10M8 3h2M8 13h2" /></>,
  <><path d="M4 1.500h6l4 3.500v9.500H4zM10 1.500V5h4" fill="#fff" /><path d="M0 6h6v4H3l-2 2z" fill={BLUE} stroke="none" /><path d="M7 8h5M7 11h5" stroke={DEEP} /></>,
  <><path d="M4 1.500h8V7c0 4-8 4-8 0zM4 3H1c0 3 1 4.500 3 4.500M12 3h3c0 3-1 4.500-3 4.500M8 10v3M5 14.500h6M6 12.500h4" fill="#fff" strokeWidth="1.200" /></>,
  <><path d="M2.500 1H9l4.500 4v10h-11zM9 1v4h4.500" fill="#fff" strokeWidth="1.200" /><path d="M5 13V9M8 13v-2.500M11 13V8" stroke="#222" strokeWidth="1.800" /></>,
  <><path d="M8 2h5v4H8zM1 9h5v5H1z" fill="#fff" /><path d="M2 8h4v6H2z" fill={GREY} /><path d="M6.500 8h9L12.500 11.500V16L10 14v-2.500z" fill="#fff" />{bolt}</>,
  <><path d="M4 3h11v5M1 9v5h6" /><path d="m5 12 3-7 2 4" stroke={DEEP} /><path d="M7.500 8h8L12.500 11.500V16L10.500 14v-2.500z" fill="#fff" />{bolt}</>,
  <><path d="M8 3h7M8 6h5M1 10h5M1 13.500h6" stroke="#c77" /><path d="M7 8h8.500L12.500 11.500V16L10 14v-2.500z" fill="#fff" />{bolt}</>,
  <><path d="M1 3h14v10.500H1z" fill="#fff" /><path d="m1.500 12 4-5 3 3 2.500-2 4 4v1h-13z" fill={BLUE} stroke={DEEP} /><circle cx="11.500" cy="5.500" r="1" fill={DEEP} stroke="none" /></>,
  <><path d="M3 2h12v12H2V8l4 1 2-4 4-1" fill={BLUE} stroke={DEEP} /><path d="M6 9c3 0 2-4 6-4v6l-5 2z" fill="#fff" stroke="none" /><path d="M0 0h5v6L2.500 8 0 6zM11 9h4.500v5l-2.300 2L11 14z" fill="#d2691e" stroke="none" /><circle cx="2.500" cy="3" r="1.200" fill="#fff" stroke="none" /></>,
  <><path d="m8 1 3.500 3.500L8 8 4.500 4.500zM8 8l3.500 3.500L8 15l-3.500-3.500zM4.500 4.500 8 8l-3.500 3.500L1 8zM11.500 4.500 15 8l-3.500 3.500L8 8z" stroke="#9b3fa5" strokeWidth="1.200" /></>,
  <><path d="M1 2.500h8l6 5.500-6 5.500H1L6.500 8zM4 2.500 9.500 8 4 13.500M6 8h8" fill="#fff" stroke="#3b84d6" /></>,
];

function Toggle({ on }: { on?: boolean }) {
  return on ? (
    <span className="flex h-[12px] w-[25px] items-center justify-between rounded-full bg-[#1b8360] pr-[3px] pl-[4px] text-[6.5px] text-white">
      On
      <i className="size-[6px] rounded-full bg-white" />
    </span>
  ) : (
    <span className="flex h-[12px] w-[25px] items-center justify-between rounded-full border border-[#999] bg-white pr-[3px] pl-[3px] text-[6.5px] text-[#777]">
      <i className="size-[6px] rounded-full bg-[#555]" />
      Off
    </span>
  );
}

function VisualizationsPane() {
  return (
    <aside className="flex w-[142px] shrink-0 flex-col border-r border-[#e2e2e2] bg-[#f1f1f0] text-[#333]">
      <div className="flex h-[22px] items-center justify-between pt-[9px] pr-[6px] pl-[7px]">
        <h2 className="text-[11.4px] leading-[14px] font-semibold">Visualizations</h2>
        <DoubleChevron />
      </div>
      <div className="mt-[8px] pl-[7px] text-[8.7px] leading-[12px] font-semibold">Build visual</div>
      <div className="mt-[3px] flex h-[25px] pl-[7px]">
        <span className="flex h-[25px] w-[24px] items-center justify-center bg-[#d3d2d0]">
          <Icon size={20} box={20}>
            <path d="M3 1.500h13" stroke="#333" />
            <path d="M1 5h18v5.500H1zM1 12.500h18V18H1z" fill="#1b8360" stroke="#1d4d3b" strokeDasharray="1.500 1" />
          </Icon>
        </span>
        <Icon size={20} box={20} className="mt-[3px] ml-[30px]">
          <path d="M2 12V8h4.500v8H3M6.500 8V2H11v8M11 5h4v2" />
          <path d="M18 6.500 11.500 13l-2 1c-1.500 1-1.500 3-3 4 3 .5 5-.5 6-2.500L18.500 8z" fill="#fff" />
        </Icon>
        <Icon size={20} box={20} className="mt-[3px] ml-[31px]">
          <circle cx="8.500" cy="8.500" r="7.500" />
          <path d="m14 14 5 5" strokeWidth="2.200" />
          <path d="m2 8 4-3 3 2.500 5-3.500M5 14V9M8 15v-5M11 14V9.500M13.500 12V8" />
        </Icon>
      </div>
      <svg width="141" height="9" viewBox="0 0 141 9" fill="none" stroke="#b4b2b0" className="mt-[1px] block shrink-0">
        <path d="M0 8.500h13l6-6 6 6h116" />
      </svg>
      <div className="mt-[7px] grid shrink-0 grid-cols-[repeat(6,21.800px)] auto-rows-[21.700px] pl-[6px]">
        {gallery.map((cell, i) => (
          <span
            key={i}
            className={`flex size-[20px] items-center justify-center ${i === 26 ? "border border-[#8a8886] bg-[#e6e5e4]" : ""}`}
          >
            <Icon size={16} box={16} stroke="#5a5a5a">
              {cell}
            </Icon>
          </span>
        ))}
        <span className="flex size-[20px] items-center justify-center gap-[3px]">
          <i className="size-[1.5px] bg-[#444]" />
          <i className="size-[1.5px] bg-[#444]" />
          <i className="size-[1.5px] bg-[#444]" />
        </span>
      </div>
      <div className="mt-[3px] flex flex-1 justify-between border-t border-[#e0e0e0] text-[8.7px] text-[#444]">
        <div className="w-[135px] pl-[4px]">
          <div className="pt-[7px] pl-[6px] leading-[12px]">Field</div>
          <div className="mt-[3px] h-[28px] w-[131px] border border-dotted border-[#d0d0d0] bg-white pt-[3px]">
            <div className="flex h-[18px] items-center rounded-[2px] border border-[#d4d2d0] bg-[#ebebea] pl-[3px]">
              <span className="w-[100px]">Product_Category</span>
              <Icon size={9} box={9}>
                <path d="m.5 2.500 4 4 4-4" />
              </Icon>
              <Icon size={7} box={7} className="ml-[5px]">
                <path d="m.5.5 6 6M6.500.5l-6 6" />
              </Icon>
            </div>
          </div>
          <div className="mt-[8px] pl-[6px] text-[8.9px] leading-[12px] font-semibold">Drill through</div>
          <div className="mt-[8px] flex h-[12px] items-center justify-between pr-[11px] pl-[6px]">
            Cross-report
            <Toggle />
          </div>
          <div className="mt-[9px] flex h-[12px] items-center justify-between pr-[11px] pl-[6px]">
            Keep all filters
            <Toggle on />
          </div>
        </div>
        <span className="mt-[1px] h-[86px] w-[4px] rounded-full bg-[#8f8e8d]" />
      </div>
    </aside>
  );
}

const tables = ["ChartGuide", "Dashboard Guide", "DashboardSteps", "Data", "KPIGuide", "RetailSalesTable", "SlicerGuide"];

function DataPane() {
  return (
    <aside className="flex flex-1 flex-col bg-[#f1f1f0] text-[#333]">
      <div className="flex h-[22px] items-center justify-between pt-[9px] pr-[6px] pl-[6px]">
        <h2 className="text-[11.4px] leading-[14px] font-semibold">Data</h2>
        <DoubleChevron />
      </div>
      <div className="mt-[14px] mr-[4px] ml-[3px] flex h-[19px] items-center rounded-[2px] border-b border-[#aaa] bg-white">
        <Icon size={12} box={12} className="ml-[9px]">
          <circle cx="5.200" cy="5.200" r="4.500" stroke="#666" />
          <path d="m8.500 8.500 3 3" stroke="#666" />
        </Icon>
        <span className="mt-[1px] ml-[5px] text-[10px] text-[#666]">Search</span>
      </div>
      <ul className="mt-[8px] text-[8.7px] text-[#444]">
        {tables.map((name) => (
          <li key={name} className="flex h-[18.75px] items-center">
            <Icon size={8} box={8} className="ml-[11px]">
              <path d="m1.500.5 3.800 3.500L1.500 7.500" />
            </Icon>
            <span className="relative ml-[3px]">
              <Icon size={10} box={10}>
                <rect x=".6" y=".6" width="8.800" height="8.800" rx="1" />
                <path d="M.6 3.500h8.800M.6 6.500h8.800M3.500.6v8.800M6.500.6v8.800" />
              </Icon>
              {name === "Data" && (
                <svg width="9" height="9" viewBox="0 0 9 9" className="absolute top-[4px] left-[4px]">
                  <circle cx="4.500" cy="4.500" r="4.500" fill="#1b8360" />
                  <path d="m2.300 4.600 1.600 1.600 2.800-3" fill="none" stroke="#fff" />
                </svg>
              )}
            </span>
            <span className="ml-[4px]">{name}</span>
          </li>
        ))}
      </ul>
    </aside>
  );
}

function StatusBar() {
  return (
    <footer className="flex h-[18px] shrink-0 items-center border-t border-[#dedede] bg-[#f1f1ef] pt-[2px] text-[8.7px] text-[#555]">
      <span className="w-[835px] pl-[3px]">Page 1 of 1</span>
      <span className="w-[7px]">-</span>
      <svg width="78" height="12" viewBox="0 0 78 12" className="block">
        <path d="M0 6h78" stroke="#8a8a8a" />
        <path d="M38.500 4v4" stroke="#555" />
        <path d="M15 1.500v9" stroke="#444" strokeWidth="3" />
      </svg>
      <span className="ml-[4px] font-semibold">+</span>
      <span className="ml-[11px]">45%</span>
      <Icon size={13} box={13} className="ml-[15px]">
        <path d="M.6 2h11.800v9H.6z" stroke="#666" />
        <path d="M3 5.500V4.200h1.500M8.500 4.200H10v1.300M3 7.500v1.300h1.500M8.500 8.800H10V7.500" />
      </Icon>
    </footer>
  );
}

export default function App() {
  return (
    <div className="flex h-[525px] w-[1000px] flex-col overflow-hidden bg-[#fafafa] font-['Noto_Sans',sans-serif]">
      <TitleBar />
      <Tabs />
      <Ribbon />
      <main className="flex h-[382px] shrink-0 bg-[#f1f1ef]">
        <Rail />
        <div className="flex w-[660px] shrink-0 flex-col bg-white">
          <ReportPage />
          <PageTabs />
        </div>
        <FiltersPane />
        <VisualizationsPane />
        <DataPane />
      </main>
      <StatusBar />
    </div>
  );
}
